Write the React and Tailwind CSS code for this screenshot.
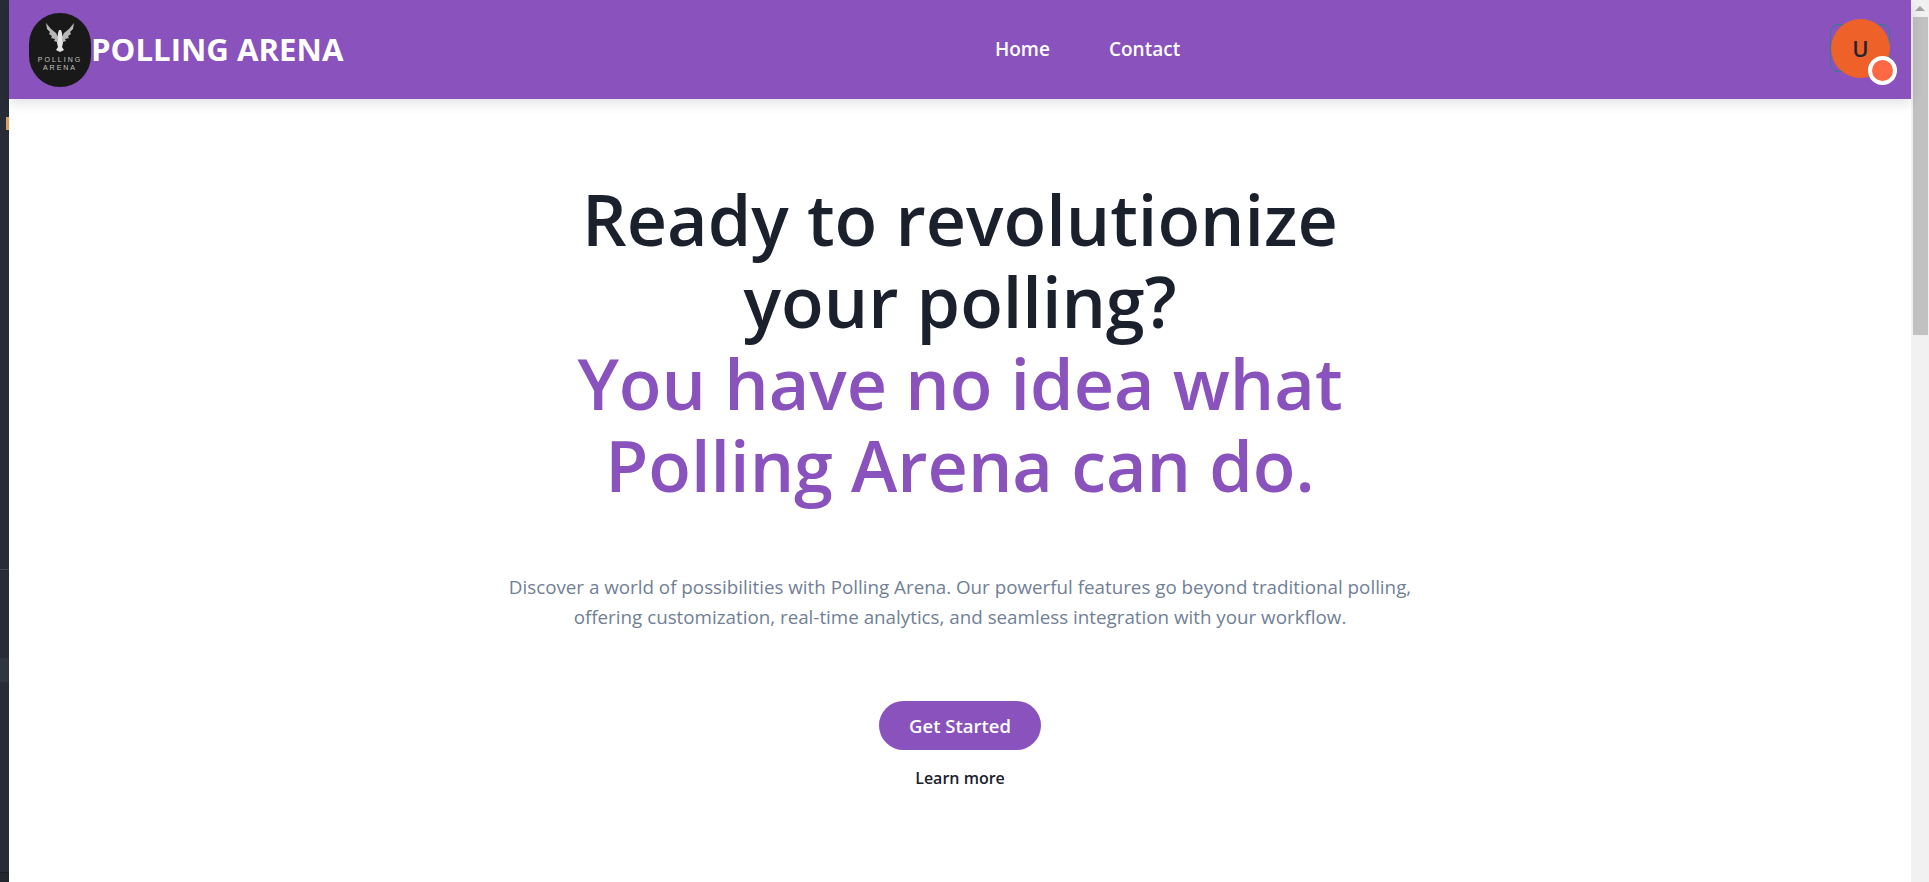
import React from 'react';

const font = "font-['Open_Sans','Noto_Sans',sans-serif]";

const Logo = () => (
  <div className="w-[62px] h-[74px] rounded-[31px] bg-[#191919] flex flex-col items-center shrink-0 pt-[10px]">
    <svg width="28" height="30" viewBox="0 0 28 30">
      <path fill="#b8b8b8" d="M0 0 L5 6 L10 10 L12 14 L11 19 L8 18 L9 16 L5 15 L6 13 L3 11 L4 9 L1 6 Z" />
      <path fill="#b8b8b8" d="M28 0 L23 6 L18 10 L16 14 L17 19 L20 18 L19 16 L23 15 L22 13 L25 11 L24 9 L27 6 Z" />
      <path fill="#e6e6e6" d="M13 7 L15 7 L16 10 L17 20 L16 24 L18 27 L14 29 L10 27 L12 24 L11 20 L12 10 Z" />
    </svg>
    <span className="mt-[3px] text-[7px] leading-[8.5px] tracking-[2px] text-[#c4c4c4] text-center font-['Liberation_Sans',sans-serif]">
      POLLING<br />ARENA
    </span>
  </div>
);

const Navbar = () => (
  <header className="h-[99px] bg-[#8952bc] shadow-[0_4px_12px_rgba(0,0,0,0.12)] flex items-center pl-5 pr-[21px] relative">
    <div className="flex items-center w-[966px]">
      <Logo />
      <span className="text-white text-[31.2px] font-bold leading-none">POLLING ARENA</span>
    </div>
    <nav className="flex items-center gap-[59px] mb-px text-white text-[19px] font-semibold">
      <a>Home</a>
      <a>Contact</a>
    </nav>
    <div className="ml-auto mb-[3px] relative w-[60px] h-[48px] rounded-lg border border-[#2f7f86]">
      <div className="absolute left-0 top-[-6px] w-[59px] h-[59px] rounded-full bg-[#ee622a] flex items-center justify-center text-[#1f2430] text-[22px] font-semibold">U</div>
      <div className="absolute left-[37px] top-[31px] w-[29px] h-[29px] rounded-full bg-[#ff6845] border-[4px] border-white" />
    </div>
  </header>
);

const Hero = () => (
  <main className="flex flex-col items-center pt-[79px]">
    <h1 className="text-[70px] leading-[82px] font-semibold text-[#1a202c] text-center w-[900px]">
      Ready to revolutionize<br />your polling?<br />
      <span className="text-[#8952bc]">You have no idea what<br />Polling Arena can do.</span>
    </h1>
    <p className="mt-[66px] text-[18.8px] leading-[30px] text-[#718096] text-center w-[1000px]">
      Discover a world of possibilities with Polling Arena. Our powerful features go beyond traditional polling,<br />
      offering customization, real-time analytics, and seamless integration with your workflow.
    </p>
    <button className="mt-[69px] w-[162px] h-[49px] rounded-full bg-[#8952bc] text-white text-[18.5px] font-semibold">Get Started</button>
    <a className="mt-[16px] text-[16px] font-semibold text-[#1a202c]">Learn more</a>
  </main>
);

const Scrollbar = () => (
  <div className="w-[18px] bg-[#f1f1f1] flex flex-col items-center shrink-0">
    <div className="h-[17px] flex items-center justify-center">
      <div className="w-0 h-0 border-x-[5px] border-x-transparent border-b-[5px] border-b-[#a3a3a3]" />
    </div>
    <div className="w-[15px] h-[318px] bg-[#c1c1c1]" />
  </div>
);

export default function App() {
  return (
    <div className={`h-[882px] w-[1929px] flex overflow-hidden ${font}`}>
      <div className="w-[9px] bg-[#272c36] shrink-0 flex flex-col">
        <div className="h-[117px]" />
        <div className="h-[13px] w-[3px] ml-[6px] bg-[#d9a066]" />
        <div className="h-[439px]" />
        <div className="h-px bg-[#414856]" />
        <div className="h-[88px]" />
        <div className="h-[24px] bg-[#2f3641]" />
        <div className="h-[190px]" />
        <div className="h-px bg-[#181b21]" />
        <div className="flex-1 bg-[#22262e]" />
      </div>
      <div className="flex-1 bg-white">
        <Navbar />
        <Hero />
      </div>
      <Scrollbar />
    </div>
  );
}
